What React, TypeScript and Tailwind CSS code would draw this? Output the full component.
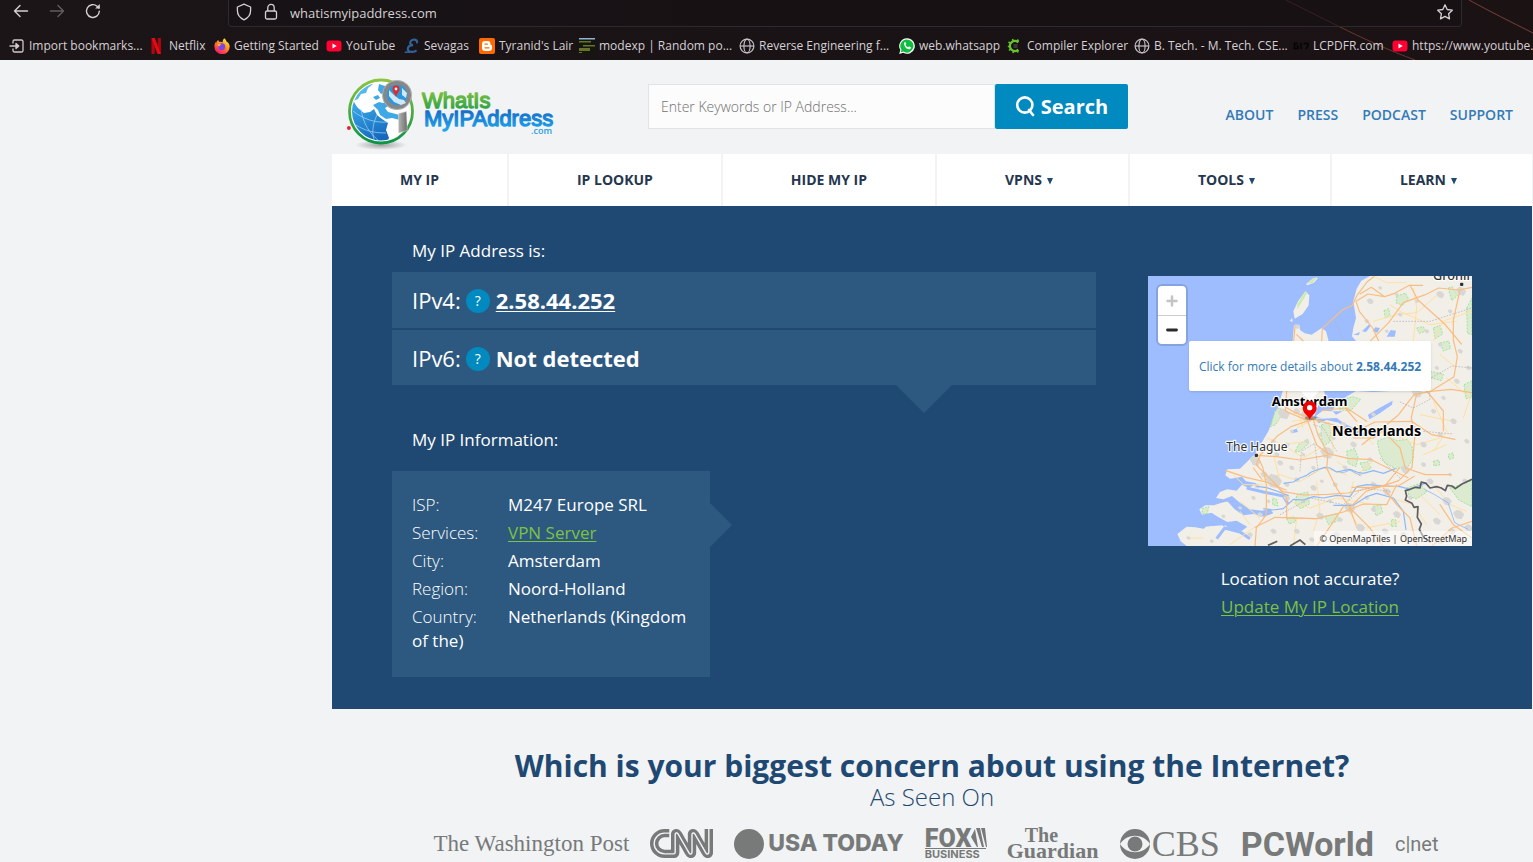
import type { ReactNode } from "react";
import { SiCnn } from "react-icons/si";

/* ---------- Browser icons ---------- */

const BackIcon = ({ className = "" }: { className?: string }) => (
  <svg viewBox="0 0 16 16" className={`size-4 ${className}`} fill="none" stroke="currentColor" strokeWidth="1.4" strokeLinecap="round" strokeLinejoin="round">
    <path d="M14.5 8H1.5M7 2.5 1.5 8 7 13.5" />
  </svg>
);

const ReloadIcon = () => (
  <svg viewBox="0 0 16 16" className="size-4" fill="none" stroke="currentColor" strokeWidth="1.4" strokeLinecap="round">
    <path d="M14.3 8.2a6.4 6.4 0 1 1-2.2-5L14 5" />
    <path d="M14.8 1v4.6h-4.6z" fill="currentColor" stroke="none" />
  </svg>
);

const ShieldIcon = () => (
  <svg viewBox="0 0 16 18" className="h-[18px] w-4" fill="none" stroke="currentColor" strokeWidth="1.3" strokeLinejoin="round">
    <path d="M8 1.2 14.6 4v3.6c0 4.4-2.8 7.6-6.6 9.2C4.2 15.2 1.4 12 1.4 7.6V4z" />
  </svg>
);

const LockIcon = () => (
  <svg viewBox="0 0 14 18" className="h-[18px] w-[14px]" fill="none" stroke="currentColor" strokeWidth="1.3">
    <rect x="1.5" y="8" width="11" height="8" rx="1.5" />
    <path d="M3.8 8V4.6a3.2 3.2 0 0 1 6.4 0V8" />
  </svg>
);

const StarIcon = () => (
  <svg viewBox="0 0 18 18" className="size-[18px]" fill="none" stroke="currentColor" strokeWidth="1.3" strokeLinejoin="round">
    <path d="m9 1.8 2.2 4.7 5.1.7-3.700 3.500.9 5.200L9 13.400l-4.500 2.500.9-5.200L1.700 7.200l5.100-.7z" />
  </svg>
);

const ImportIcon = () => (
  <svg viewBox="0 0 16 16" className="size-4" fill="none" stroke="#cfc9cd" strokeWidth="1.3" strokeLinecap="round" strokeLinejoin="round">
    <path d="M4 5V3.500A1.500 1.500 0 0 1 5.500 2h7A1.500 1.500 0 0 1 14 3.500v9a1.500 1.500 0 0 1-1.500 1.500h-7A1.500 1.500 0 0 1 4 12.500V11M1 8h8" />
    <path d="M7 5.500 9.800 8 7 10.500z" fill="#cfc9cd" />
  </svg>
);

const NetflixIcon = () => (
  <svg viewBox="0 0 16 16" className="size-4">
    <path d="M2.500 0h3.200v16H2.500zM8.700 0h3.200v16H8.700z" fill="#b1060f" />
    <path d="M2.500 0h3.400l6 16H8.500z" fill="#e50914" />
  </svg>
);

const FirefoxIcon = () => (
  <svg viewBox="0 0 16 16" className="size-4">
    <defs>
      <linearGradient id="ff" x1="0.8" y1="0" x2="0.2" y2="1">
        <stop offset="0" stopColor="#fff04a" />
        <stop offset="0.4" stopColor="#ff9a1f" />
        <stop offset="0.75" stopColor="#ff3b4e" />
        <stop offset="1" stopColor="#e5158b" />
      </linearGradient>
    </defs>
    <path d="M10.300.2c1.200 1 1.800 2 2 3 1.900 1.200 3.400 3 3.400 5.600a7.600 7.600 0 0 1-15.300-.4C.3 6.300 1 4.800 1.800 3.900l.4 1.200C2.500 3.700 3.400 2.400 4.300 2c0 .8.4 1.400 1 1.800C7 3.500 8 4 8.600 4.400 8.500 2.800 9.200 1.200 10.300.2z" fill="url(#ff)" />
    <circle cx="7.8" cy="8.7" r="3.4" fill="#7b45e8" />
    <path d="M3.500 6.400c1.500-.7 3-.5 4.200.4-1.300.2-2 .8-2.200 1.500-.9.100-1.900-.8-2-1.900z" fill="#ffb13b" />
  </svg>
);

const YouTubeIcon = () => (
  <svg viewBox="0 0 16 16" className="size-4">
    <rect x="0.5" y="2.5" width="15" height="11" rx="3" fill="#ff0033" />
    <path d="m6.500 5.600 4.200 2.400-4.200 2.400z" fill="#fff" />
  </svg>
);

const SevagasIcon = () => (
  <svg viewBox="0 0 16 16" className="size-4" fill="none" stroke="#2f6299" strokeWidth="2.2" strokeLinecap="round">
    <path d="M13 4.300C13.500 1 8 .8 6.500 3.600c-.9 1.900.2 3.300 2.500 3.600-3 .1-5 1.500-5.200 3.700-.3 3.300 4.700 3.600 8 2" />
    <path d="M1.200 14.200h4.500" strokeWidth="1.4" />
  </svg>
);

const TyranidIcon = () => (
  <span className="flex size-4 items-center justify-center rounded-xs bg-[#ff6a00] text-white">
    <svg viewBox="0 0 12 12" className="size-3">
      <path d="M1 4a3 3 0 0 1 3-3h2.500a3 3 0 0 1 3 3c0 .8.3 1 .8 1 .5 0 .7.300.7.700V8a3 3 0 0 1-3 3H4a3 3 0 0 1-3-3z" fill="#fff" />
      <path d="M4 4.200h2.300M4 7.800h4" stroke="#ff6a00" strokeWidth="1.3" strokeLinecap="round" />
    </svg>
  </span>
);

const ModexpIcon = () => (
  <svg viewBox="0 0 16 16" className="size-4">
    <path d="M0 0h16v16H0z" fill="#14170c" />
    <path d="M0 0h16v1.500H0z" fill="#8fb4d6" />
    <path d="M0 3h12v1.500H0zM4 7h12v1.500H4zM0 10h11v3H0zM0 14h3v1H0z" fill="#6b7128" />
  </svg>
);

const GlobeIcon = () => (
  <svg viewBox="0 0 16 16" className="size-4" fill="none" stroke="#c5c0c6" strokeWidth="1.2">
    <circle cx="8" cy="8" r="6.9" />
    <ellipse cx="8" cy="8" rx="3.1" ry="6.9" />
    <path d="M1 8h14" />
  </svg>
);

const WhatsAppIcon = () => (
  <svg viewBox="0 0 16 16" className="size-4">
    <path d="M8 .2A7.800 7.800 0 0 0 1.300 12L.2 15.900l4-1.100A7.800 7.800 0 1 0 8 .2z" fill="#fff" />
    <path d="M8 1.400A6.600 6.600 0 0 0 2.500 11.800l-.7 2.500 2.600-.7A6.600 6.600 0 1 0 8 1.400z" fill="#0fbd3f" />
    <path d="M5.400 4.200c.6-.5 1-.2 1.200.3l.5 1.200c.1.500-.6.800-.5 1.200.5 1.100 1.400 1.900 2.500 2.400.5.100.7-.8 1.200-.7l1.400.7c.5.300.2 1.300-.5 1.700-2.500 1.400-7.500-3.300-5.800-6.800z" fill="#fff" />
  </svg>
);

const CompilerIcon = () => (
  <svg viewBox="0 0 16 16" className="size-4" fill="none">
    <path d="M11.300 4.300a5 5 0 1 0 0 7.400" stroke="#67c52a" strokeWidth="2.4" />
    <path d="M10.300 1.500 11.500 3.500M5.500 1l.7 2M1.500 4l1.700 1.200M0.800 8.500h2M2 12.500l1.500-1.300M6 15l.5-2M10.500 14.500l.5-2" stroke="#67c52a" strokeWidth="1.6" />
    <path d="M6.500 6h4v4h-4z" fill="#39353a" />
  </svg>
);

const G17Icon = () => (
  <svg viewBox="0 0 16 16" className="size-4" fill="none" stroke="#050304" strokeWidth="1.5">
    <path d="M5 5.500H1.500v5H5V8H3.500M8 5v6M10.500 5.500h4.500v2l-2 3.500" />
  </svg>
);

const bookmarks: { label: string; icon: ReactNode }[] = [
  { label: "Import bookmarks...", icon: <ImportIcon /> },
  { label: "Netflix", icon: <NetflixIcon /> },
  { label: "Getting Started", icon: <FirefoxIcon /> },
  { label: "YouTube", icon: <YouTubeIcon /> },
  { label: "Sevagas", icon: <SevagasIcon /> },
  { label: "Tyranid's Lair", icon: <TyranidIcon /> },
  { label: "modexp | Random po...", icon: <ModexpIcon /> },
  { label: "Reverse Engineering f...", icon: <GlobeIcon /> },
  { label: "web.whatsapp", icon: <WhatsAppIcon /> },
  { label: "Compiler Explorer", icon: <CompilerIcon /> },
  { label: "B. Tech. - M. Tech. CSE...", icon: <GlobeIcon /> },
  { label: "LCPDFR.com", icon: <G17Icon /> },
  { label: "https://www.youtube....", icon: <YouTubeIcon /> },
];

function BrowserChrome() {
  return (
    <header className="relative overflow-hidden bg-linear-to-r from-[#1c1517] via-[#191316] to-[#1b1214] font-['Open_Sans',sans-serif] text-[#d5d0d4]">
      <svg className="absolute top-0 right-0 h-[60px] w-[300px]" viewBox="0 0 300 60" fill="none" aria-hidden="true">
        <path d="M53 0c18 9 36 18 54 27s50 24 75 33" stroke="#6b372f" strokeWidth="1" />
        <path d="M236 0c20 11 42 22 64 33" stroke="#7a4036" strokeWidth="1" />
      </svg>
      <div className="relative flex h-[27px] items-start">
        <div className="flex w-[228px] shrink-0 gap-5 pt-[3px] pl-[13px]">
          <button aria-label="Back"><BackIcon /></button>
          <button aria-label="Forward" className="text-[#625c60]"><BackIcon className="-scale-x-100" /></button>
          <button aria-label="Reload"><ReloadIcon /></button>
        </div>
        <div className="mr-[71px] flex h-[27px] flex-1 items-start rounded-b-sm border border-t-0 border-[#2b2a2e] bg-[#161114]/60 px-[7px] pt-[3px]">
          <ShieldIcon />
          <span className="ml-3"><LockIcon /></span>
          <input aria-label="Address" defaultValue="whatismyipaddress.com" className="ml-3 h-5 min-w-0 flex-1 bg-transparent text-[13px] outline-none" />
          <button aria-label="Bookmark this page"><StarIcon /></button>
        </div>
      </div>
      <nav className="relative grid h-[33px] grid-cols-[140px_65px_112px_78px_75px_100px_160px_160px_108px_127px_159px_99px_1fr] items-center pl-[9px]">
        {bookmarks.map((b) => (
          <a key={b.label} href="#" className="mt-1 flex items-center gap-1 text-xs whitespace-nowrap">
            <span className="shrink-0">{b.icon}</span>
            <span>{b.label}</span>
          </a>
        ))}
      </nav>
    </header>
  );
}

/* ---------- Site header ---------- */

const SiteLogo = () => (
  <svg viewBox="0 0 212 76" className="h-[76px] w-[212px]" role="img" aria-label="WhatIs MyIPAddress.com">
    <defs>
      <linearGradient id="ring" x1="0" y1="0" x2="0" y2="1">
        <stop offset="0" stopColor="#8cc540" />
        <stop offset="1" stopColor="#0b9444" />
      </linearGradient>
      <linearGradient id="sea" x1="0" y1="0" x2="0.3" y2="1">
        <stop offset="0" stopColor="#3fb4ee" />
        <stop offset="1" stopColor="#1668bd" />
      </linearGradient>
      <linearGradient id="green" x1="0" y1="0" x2="0" y2="1">
        <stop offset="0.15" stopColor="#7cc142" />
        <stop offset="1" stopColor="#1d9a48" />
      </linearGradient>
      <linearGradient id="blue" x1="0" y1="0" x2="0" y2="1">
        <stop offset="0.1" stopColor="#1368c4" />
        <stop offset="1" stopColor="#1fa9ee" />
      </linearGradient>
      <linearGradient id="metal" x1="0" y1="0" x2="1" y2="0">
        <stop offset="0" stopColor="#b4b4b4" />
        <stop offset="1" stopColor="#6c6c6c" />
      </linearGradient>
      <radialGradient id="shade">
        <stop offset="0" stopColor="#8c8c8c" stopOpacity="0.8" />
        <stop offset="1" stopColor="#8c8c8c" stopOpacity="0" />
      </radialGradient>
      <clipPath id="globe"><circle cx="34" cy="34.5" r="29" /></clipPath>
    </defs>
    <ellipse cx="34" cy="68" rx="26" ry="5" fill="url(#shade)" />
    <circle cx="34" cy="34.5" r="31.5" fill="#fff" stroke="url(#ring)" strokeWidth="2.8" />
    <circle cx="34" cy="34.5" r="29" fill="#fff" />
    <g clipPath="url(#globe)">
      <path d="M5 20c2 4 3 8 6 11l6 5 6-1 4-3 3 6 5 4 6 4-2 7 3 8-2 5-14 2-12-5-9-12z" fill="url(#sea)" />
      <path d="M4 20c4-8 9-12 18-15l4 2-5 4-2 5-5 1-3 5-5 2z" fill="#54b8ec" />
      <path d="M32 7l6 2 1 6-5 2-3-4zM26 28l6-3 4 1 5-2 2 4-5 3 3 4 8 2 6 2 4 3-6 1-8-2-6 1-6-4-2-5zM26 20l5-2 2 3-4 2z" fill="#3fa9e6" />
      <path d="M6 34c10 8 22 12 34 11M9 48c9 6 19 8 30 8M14 32c2 14 8 24 18 32M30 38c-4 8-6 18-2 27" fill="none" stroke="#a4dbf8" strokeWidth="0.7" />
    </g>
    <path d="m51.500 36.500 8-2 .8 19-8.800 2.500z" fill="url(#metal)" stroke="#ddd" strokeWidth="0.5" />
    <circle cx="50" cy="18" r="12.5" fill="#2c97dc" stroke="#858789" strokeWidth="4.5" />
    <circle cx="50" cy="18" r="14.6" fill="none" stroke="#b9bbbc" strokeWidth="0.8" />
    <path d="m42 13 5 5 5 4 5 1 2 3-5 2-7-3-5-6zM55 11l5 5-1 5-4-3z" fill="#cfe9fa" />
    <path d="M49 20c-1-4-3.500-5-3.500-8a3.500 3.500 0 0 1 7 0c0 3-2.500 4-3.500 8z" fill="#e32a22" />
    <circle cx="49" cy="12" r="1.4" fill="#fff" />
    <circle cx="1.9" cy="51" r="1.9" fill="#e8202a" />
    <g fontFamily="'Liberation Sans', Arial, sans-serif" fontSize="22" strokeWidth="1.3" strokeLinejoin="round">
      <text x="75" y="31" fill="url(#green)" stroke="url(#green)">WhatIs</text>
      <text x="77" y="49" fill="url(#blue)" stroke="url(#blue)">MyIPAddress</text>
    </g>
    <text x="184" y="57" fontFamily="'Open Sans', sans-serif" fontSize="9" fontWeight="600" fill="#2a9be3">.com</text>
  </svg>
);

const topLinks = ["ABOUT", "PRESS", "PODCAST", "SUPPORT"];
const navItems = [
  { label: "MY IP", menu: false },
  { label: "IP LOOKUP", menu: false },
  { label: "HIDE MY IP", menu: false },
  { label: "VPNS", menu: true },
  { label: "TOOLS", menu: true },
  { label: "LEARN", menu: true },
];

function SiteHeader() {
  return (
    <div>
      <div className="flex h-[94px] items-start pr-[19px] pl-[15px]">
        <a href="#" className="mt-[17px] shrink-0"><SiteLogo /></a>
        <form className="mt-6 ml-[89px] flex w-[480px] shrink-0" onSubmit={(e) => e.preventDefault()}>
          <input
            aria-label="Search"
            placeholder="Enter Keywords or IP Address..."
            className="h-[45px] min-w-0 flex-1 border border-[#e1e3e5] bg-[#fcfcfc] px-3 text-sm font-light outline-none placeholder:text-[#707070]"
          />
          <button className="flex h-[45px] w-[133px] items-center justify-center gap-[6px] rounded-xs bg-[#008ac0] text-xl font-bold text-white">
            <svg viewBox="0 0 20 22" className="h-[22px] w-5" fill="none" stroke="currentColor" strokeWidth="2.6">
              <circle cx="9.8" cy="9" r="7.6" />
              <path d="m14 14 4 5" strokeLinecap="round" />
            </svg>
            Search
          </button>
        </form>
        <nav className="mt-[45px] ml-auto flex gap-6 text-sm leading-5 font-semibold text-[#337ab7]">
          {topLinks.map((l) => (
            <a key={l} href="#">{l}</a>
          ))}
        </nav>
      </div>
      <nav className="flex gap-[2px] text-sm font-bold text-[#25374f]">
        {navItems.map((n) => (
          <a
            key={n.label}
            href="#"
            className={`flex h-[52px] flex-auto items-center justify-center gap-[5px] bg-white ${n.menu ? "pr-[7px]" : ""}`}
          >
            {n.label}
            {n.menu && (
              <svg viewBox="0 0 6 7" className="mt-[2px] h-[7px] w-[6px]" fill="#1f4971" aria-hidden="true">
                <path d="M0 0h6L3 6.500z" />
              </svg>
            )}
          </a>
        ))}
      </nav>
    </div>
  );
}

/* ---------- Map ---------- */

const towns: [number, number, number][] = [
  [430, 438, 18], [500, 445, 20], [470, 430, 10], [560, 555, 20], [400, 640, 24], [345, 580, 16], [372, 620, 11], [628, 720, 17], [795, 605, 14],
  [740, 672, 12], [830, 375, 16], [690, 100, 10], [900, 80, 12], [962, 70, 15], [470, 176, 8], [520, 660, 10], [455, 600, 8], [585, 650, 8],
  [540, 745, 12], [440, 690, 10], [360, 740, 8], [470, 790, 9], [660, 780, 14], [700, 650, 9], [770, 740, 12], [735, 790, 10], [870, 640, 10],
  [920, 700, 14], [955, 740, 16], [890, 760, 12], [935, 790, 11], [640, 530, 10], [690, 575, 8], [850, 530, 10], [900, 500, 8], [940, 460, 10],
  [880, 430, 8], [910, 390, 7], [950, 340, 9], [960, 250, 8], [900, 230, 7], [780, 140, 7], [830, 100, 6], [860, 190, 7], [720, 60, 6],
  [740, 190, 6], [500, 520, 7], [440, 530, 8], [410, 560, 8], [490, 560, 6], [610, 470, 9], [340, 690, 7], [300, 720, 6], [250, 745, 6],
  [145, 810, 6], [215, 820, 6], [330, 800, 8], [400, 790, 9], [590, 800, 10], [515, 815, 8], [700, 725, 8], [790, 800, 9], [930, 620, 6],
  [420, 585, 9], [470, 635, 8], [490, 700, 7], [615, 600, 8], [660, 620, 6], [520, 600, 7], [570, 700, 7], [600, 755, 8], [680, 690, 7],
  [400, 520, 7], [455, 490, 6], [580, 510, 7], [540, 500, 6], [980, 520, 8], [975, 640, 9], [985, 780, 12], [900, 820, 10], [850, 590, 8],
  [820, 480, 8], [700, 440, 7], [680, 160, 7], [770, 80, 6], [930, 130, 7], [890, 300, 7], [985, 300, 8], [350, 655, 8], [385, 700, 6],
  [440, 650, 8], [545, 640, 6], [810, 690, 7], [950, 810, 8], [640, 820, 8], [700, 820, 8],
];

const forests = [
  "M712 520l30-14 30 12 30-4 14 22 4 34-16 26-38 6-32-18-16-30z",
  "M620 550l24-8 10 26-6 28-24-10z",
  "M545 470l20-6 8 24-4 34-18 12-8-30z",
  "M980 120l16-30v110l-14-4z",
  "M972 350l24-12v50l-18 4z",
  "M770 85l26-10 10 18-18 18-20-6z",
  "M732 128l14-6 4 20-14 8z",
  "M880 180l20-8 8 26-22 14z",
  "M830 180l20-4 6 14-18 6z",
  "M925 60l12-4 16 26-18 16z",
  "M900 225l26-6 6 22-22 8z",
  "M405 430l14-12 8 20-20 32-16 6z",
  "M475 530l28-16 4 12-28 24-14 2z",
  "M470 680l34-8 4 36-26 14-16-14z",
  "M555 745l36-8 8 20-34 12z",
  "M700 715l22-4 6 22-20 10z",
  "M398 690l12 4 4 20-16-4z",
  "M440 752l20-6 8 14-20 8z",
  "M755 755l12 0 2 20-16 0z",
  "M800 660l40-14 20 26-30 20-22-6z",
  "M930 660l66-22v78l-40-20z",
  "M880 580l16-4 4 14-18 4z",
  "M590 400l48-14 24 8-30 34-32-2z",
  "M870 310l40 8-6 20-36-10z",
  "M660 585l24-4 10 20-22 8z",
  "M925 560l14-6 2 16-14 4z",
  "M186 722l20-6-4 20-14 2z",
];

const mainRoads = [
  "M545 219l2-38 60-55 30-14 14-30 30-40 20-16",
  "M648 100l36-22 50 8 30-10 44-24 40 0M648 100l10 30 40 50 18 39M734 86l-40-28-34 20",
  "M996 58l-40 8-60-6-40 20-66 24-44 60-60 60M810 52l24 44 80 72 50 60",
  "M960 66l-20 90 0 60 12 50-10 60-70 44-50 10-46 60-60 50-50 40",
  "M873 370l60-6 63 10M830 378l-16 70 10 60-8 90-40 40-60 20-80 0",
  "M425 410l40 24 50 18 70 20 60 20 60-30 110-2 60 40 70 14",
  "M440 369l-4 60 60 26M500 369l-4 70 4 12 30 80 34 26 60 14 70 4 60 30 50 24",
  "M520 455l14 46 30 56-4 44 30 60 38 56 20 54",
  "M515 455l-60 20-44 30-50 56-12 30 40 40 40 40 60 10 74-2 60-4 90-20 60 0 50-30",
  "M350 562l60 4 70 10 80-14M258 608l60 20 60 14 60 24M340 600l26 34",
  "M355 570l14 30 10 50 0 90-30 40-4 54",
  "M400 640l40 50 0 60 90 2 80-20 60-24 70 2 30-60M610 716l-40 60-40 58",
  "M345 778l60-30 120 4M628 718l60 60 40 56M628 720l50-50 60-20 40-50",
  "M730 660l40 50 40 40 20 84M740 500l40 40 16 60 60 20 76 0",
  "M650 460l-34-40-70 8M640 510l60 0 40-30M620 420l60 40",
  "M900 710l40 60 56 40M996 760l-60 20-60 54",
  "M860 369l50 60 0 60M470 200l20 19M465 176l-4 43",
];

const minorRoads = [
  "M430 430l30 10 20-20 30 40-40 20M470 420l20 60M455 460l90-10M485 440l50 24",
  "M700 24l40 20 60 0M700 160l70-20 60-6 70-60M750 110l30 20 90 40 80-10M820 60l10 60-10 99",
  "M880 219l30-60 86-30M900 260l50 40M920 330l70 60-20 60M880 400l40 90-40 60",
  "M650 470l50 60M570 470l10 80M430 530l60 40 50-30M380 510l50 20 70-10M400 560l20 80",
  "M360 640l60-20 60 20 70-40 70 20M450 700l60 20 80-30 110 20M530 640l10 90-20 60M470 750l-10 84",
  "M640 640l-20 80 40 60M680 780l100-20M750 690l70 20 40 60M840 680l60 60M880 650l50 60 50 20",
  "M280 620l30 30 60 0M300 700l60 50M330 770l-30-40M140 810l50 0M270 830l70-50",
  "M760 500l70 30 70-20M850 560l70-30M840 440l100 20M590 580l60 40 50-40",
];

const coast =
  "M690 24 664 38 650 62 640 100 648 150 640 180 636 205 648 219 740 230 760 300 752 369 700 372 648 369 622 384 590 408 576 430 548 428 528 444 545 452 590 450 612 466 640 480 668 490 684 505 650 500 622 486 596 464 560 456 536 466 522 446 540 400 556 384 552 369 580 300 566 219 558 190 545 180 515 200 494 196 480 186 478 170 462 172 458 219 440 300 428 369 412 424 385 490 345 558 300 602 262 604 256 622 270 632 306 626 318 640 350 646 326 660 306 650 290 668 262 664 240 672 228 690 250 694 276 684 300 704 330 724 366 728 390 722 400 736 372 746 340 738 310 742 284 724 262 700 240 706 222 712 196 712 178 724 186 740 214 734 236 748 262 762 290 758 322 776 306 788 276 790 256 772 234 786 216 774 190 782 166 778 140 776 112 798 122 820 140 834H996V24Z";

const Label = ({ x, y, size, weight, children }: { x: number; y: number; size: number; weight: number; children: string }) => (
  <text x={x} y={y} fontSize={size} fontWeight={weight} fill={weight > 500 ? "#000" : "#333"} stroke="#fff" strokeOpacity="0.85" strokeWidth="7" strokeLinejoin="round" paintOrder="stroke">
    {children}
  </text>
);

function LocationMap() {
  return (
    <div className="relative h-[270px] w-[324px] overflow-hidden bg-[#9ebdff] font-['Noto_Sans',sans-serif]">
      <svg viewBox="24 24 972 810" className="block h-full w-full" role="img" aria-label="Map of the Netherlands" fontFamily="'Noto Sans', sans-serif">
        <path d={coast} fill="#f2efe9" />
        <path d="M496 70l12 12-2 30-18 26-24 14-4-22 14-30zM498 48l22-18 14 0-12 14-20 8zM450 158l6-8 2 12z" fill="#f2efe9" />
        <path d="M496 70l6 4-14 24-16 26 0-16zM500 48l26-20 6 0-14 16z" fill="#cdebb0" />
        <path d="M196 776l50-4 20 14-20 4-56 2zM240 800l40-14 20 24-30 18-50 0 4-12z" fill="#f2efe9" />
        <path d="M666 190l20-20 8 2-16 20zM698 190l8-12 14 2-8 14zM752 186l16 2-4 18-24 0zM640 200l20-8-4 10zM684 440l34-20 40-22-2 12-40 28-28 16zM578 430l30 0-20 10zM452 488l18-6 4 10-20 4zM546 508l16-2 0 18-10 0z" fill="#9ebdff" />
        <path d="M320 660l50 12 60 12 14 24M230 812l24-32 46 12 30 20" fill="none" stroke="#9ebdff" strokeWidth="9" />
        <g fill="#dcead0" stroke="#8fe38c" strokeWidth="2.5" strokeDasharray="6 4">
          {forests.map((d) => <path key={d} d={d} />)}
        </g>
        <g fill="none" stroke="#ffe0a0" strokeWidth="3" strokeLinejoin="round">
          {minorRoads.map((d) => <path key={d} d={d} />)}
        </g>
        <g fill="#d9d7d4">
          {towns.map(([x, y, r]) => (
            <path key={`${x}-${y}`} d={`M${x - r} ${y - r / 3}l${r * 0.7} ${-r * 0.6} ${r * 0.8} ${r * 0.2} ${r * 0.6} ${r * 0.7} ${-r * 0.5} ${r * 0.9} ${-r} ${-r * 0.2}z`} />
          ))}
        </g>
        <g fill="none" stroke="#8db8f8" strokeWidth="3.6" strokeLinejoin="round">
          <path d="M430 646l30-4 20-12 20-8 14-10 16-6 24-8 16 2 20 12 20-4 20-4 20 8 20 4 30-8 30 8 36-14M350 655l30 4 30 10 36 14M370 722l30 4 30-4 30-28 30 2 30-10 30 4 40-8 40 4 20-30 30-6 60 4 40 2 30 8 50-20M580 712l60 0 40-26 30-10 50 14 30 40 8 56" />
          <path d="M854 664l30 16 40 24 20 60 40 20M590 610l20 4 20-8 30 16" strokeWidth="2.5" />
        </g>
        <g fill="none" stroke="#fabd80" strokeWidth="3.6" strokeLinejoin="round" strokeLinecap="round">
          {mainRoads.map((d) => <path key={d} d={d} />)}
        </g>
        <g fill="none" stroke="#b5afb3" strokeWidth="2.2" strokeDasharray="5 4">
          <path d="M586 160l24 59M996 300l-60-6-70 40 4 60-50 26-44-20M850 490l90 8M480 610l4-60 40-24 10 80-30 20M240 700l40 0M420 740l90-50 100 20 60-50 80 10M720 570l60 60M520 470l30 10 40 70M760 160l110 0 126-40" />
        </g>
        <path d="M996 634l-30 14-20 14-10-8-14-2-6 16-12-8-14-4-20 4-12-14-14-4-4 18-14-2-16 6-14 4 4 16-4 12 20 10 6 12 12-2-2 32 12 20-6 16 14 26 20 12" fill="none" stroke="#5e5e60" strokeWidth="5" strokeLinejoin="round" />
        <path d="M384 832l28-12M450 834l30-18 16 14" fill="none" stroke="#5e5e60" strokeWidth="5" />
        <Label x={879} y={36} size={38} weight={500}>Groningen</Label>
        <rect x="960" y="44" width="10" height="10" rx="3" fill="#333" />
        <Label x={395} y={414} size={39} weight={700}>Amsterdam</Label>
        <Label x={576} y={505} size={43} weight={700}>Netherlands</Label>
        <Label x={259} y={549} size={36} weight={400}>The Hague</Label>
        <rect x="344" y="557" width="10" height="10" rx="3" fill="#333" />
        <path d="M478 366h62l-31 34z" fill="#fff" />
        <ellipse cx="512" cy="450" rx="18" ry="6" fill="#000" opacity="0.3" />
        <path d="M509 455c-6-14-21-20-21-35a21 21 0 0 1 42 0c0 15-15 21-21 35z" fill="#f00000" />
        <circle cx="509" cy="419" r="8" fill="#fff" />
      </svg>
      <div className="absolute top-2 left-2 flex flex-col rounded-md border-2 border-[#86a3e0] bg-white">
        <button aria-label="Zoom in" className="flex h-[30px] w-7 items-center justify-center rounded-t border-b border-[#ccc] text-[#c4c4c4]">
          <svg viewBox="0 0 12 12" className="size-3" stroke="currentColor" strokeWidth="2.5" strokeLinecap="round"><path d="M1.500 6h9M6 1.500v9" /></svg>
        </button>
        <button aria-label="Zoom out" className="flex h-7 w-7 items-center justify-center text-[#2b2b2b]">
          <svg viewBox="0 0 12 12" className="size-3" stroke="currentColor" strokeWidth="2.8" strokeLinecap="round"><path d="M1.500 6h9" /></svg>
        </button>
      </div>
      <a href="#" className="absolute top-[65px] left-[41px] flex h-[50px] w-[242px] items-center justify-center rounded-xs bg-white pt-px font-['Open_Sans',sans-serif] text-xs whitespace-pre text-[#337ab7] shadow-sm">
        Click for more details about <b>2.58.44.252</b>
      </a>
      <div className="absolute right-0 bottom-0 bg-white/50 px-[5px] text-[9px] leading-[15px] text-[#333]">
        © <a href="#">OpenMapTiles</a> | <a href="#">OpenStreetMap</a>
      </div>
    </div>
  );
}

/* ---------- IP panel ---------- */

const details = [
  { label: "ISP:", value: "M247 Europe SRL", link: false },
  { label: "Services:", value: "VPN Server", link: true },
  { label: "City:", value: "Amsterdam", link: false },
  { label: "Region:", value: "Noord-Holland", link: false },
  { label: "Country:", value: "Netherlands (Kingdom of the)", link: false },
];

const HelpBadge = ({ label }: { label: string }) => (
  <button aria-label={label} className="mt-[2px] mr-[6px] ml-[5px] flex size-6 items-center justify-center rounded-full bg-[#008ac0] text-sm">
    ?
  </button>
);

function IpPanel() {
  return (
    <section className="flex justify-between gap-[52px] bg-[#1f4972] px-[60px] pb-8 text-[17px] leading-6 text-white">
      <div className="flex-1 pt-[33px]">
        <h2 className="pl-5">My IP Address is:</h2>
        <div className="relative mt-[9px] flex flex-col gap-[2px] text-[22px]">
          <div className="flex h-14 items-center bg-[#2d587f] px-5">
            IPv4:<HelpBadge label="About IPv4" />
            <a href="#" className="font-bold underline decoration-1 underline-offset-2">2.58.44.252</a>
          </div>
          <div className="flex h-[55px] items-center bg-[#2d587f] px-5">
            IPv6:<HelpBadge label="About IPv6" />
            <span className="font-bold">Not detected</span>
          </div>
          <svg viewBox="0 0 56 28" className="absolute top-full right-36 h-7 w-14" fill="#2d587f" aria-hidden="true">
            <path d="M0 0h56L28 28z" />
          </svg>
        </div>
        <h2 className="mt-[43px] pl-5">My IP Information:</h2>
        <div className="relative mt-[19px] w-[318px] bg-[#2d587f] px-5 pt-[22px] pb-6">
          <dl className="flex flex-col gap-1">
            {details.map((d) => (
              <div key={d.label}>
                <dt className="inline-block w-24 font-light">{d.label}</dt>
                <dd className="inline">
                  {d.link ? <a href="#" className="text-[#7dc242] underline decoration-1 underline-offset-2">{d.value}</a> : d.value}
                </dd>
              </div>
            ))}
          </dl>
          <svg viewBox="0 0 22 44" className="absolute top-8 left-full h-11 w-[22px]" fill="#2d587f" aria-hidden="true">
            <path d="M0 0v44l22-22z" />
          </svg>
        </div>
      </div>
      <div className="w-[324px] shrink-0 pt-[70px] text-center">
        <LocationMap />
        <p className="mt-[21px]">Location not accurate?</p>
        <a href="#" className="mt-1 inline-block text-[#7dc242] underline decoration-1 underline-offset-2">Update My IP Location</a>
      </div>
    </section>
  );
}

/* ---------- Press ---------- */

function PressLogos() {
  return (
    <div className="mt-5 flex h-[31px] items-center justify-center gap-[21px] pl-2 text-left leading-none text-[#777a79]">
      <span className="font-['Liberation_Serif',serif] text-[23px] whitespace-nowrap">The Washington Post</span>
      <SiCnn className="size-[63px]" aria-label="CNN" />
      <span className="flex items-center gap-1 font-[Inter,sans-serif] text-[23px] font-extrabold whitespace-nowrap">
        <span className="size-[30px] rounded-full bg-[#777a79]" />
        USA TODAY
      </span>
      <span className="flex w-[61px] flex-col font-[Roboto,sans-serif]">
        <span className="flex h-5 items-center text-[25px] font-black">
          FOX
          <svg viewBox="0 0 16 20" className="h-5 w-4 shrink-0" fill="currentColor" aria-hidden="true">
            <path d="M0 9 4 1l3 18H6zM5 0h4l4 19h-2zM10 0h4l2 19h-1z" />
          </svg>
        </span>
        <span className="border-t border-[#777a79] font-[Inter,sans-serif] text-[11px] leading-[10px] font-bold">BUSINESS</span>
      </span>
      <span className="flex w-[92px] flex-col font-['Liberation_Serif',serif] text-[22px] font-bold">
        <span className="pl-[18px] text-xl leading-[15px]">The</span>
        <span className="leading-4">Guardian</span>
      </span>
      <span className="flex items-center gap-[2px] font-['Liberation_Serif',serif] text-[36px]">
        <svg viewBox="0 0 30 30" className="size-[30px]" aria-hidden="true">
          <circle cx="15" cy="15" r="15" fill="#777a79" />
          <path d="M0 15C7 4 23 4 30 15 23 26 7 26 0 15z" fill="#f1f3f5" />
          <circle cx="15" cy="15" r="7.5" fill="#777a79" />
        </svg>
        CBS
      </span>
      <span className="font-[Roboto,sans-serif] text-[34px] font-bold">PCWorld</span>
      <span className="font-[Roboto,sans-serif] text-xl">c|net</span>
    </div>
  );
}

export default function App() {
  return (
    <div className="min-h-screen overflow-x-hidden bg-[#f1f3f5] font-['Open_Sans',sans-serif]">
      <BrowserChrome />
      <main className="pr-px pl-[332px]">
        <SiteHeader />
        <IpPanel />
        <section className="pt-[37px] text-center text-[#1f4972]">
          <h1 className="text-3xl leading-10 font-bold">Which is your biggest concern about using the Internet?</h1>
          <p className="text-2xl leading-[22px] font-light">As Seen On</p>
          <PressLogos />
        </section>
      </main>
    </div>
  );
}
